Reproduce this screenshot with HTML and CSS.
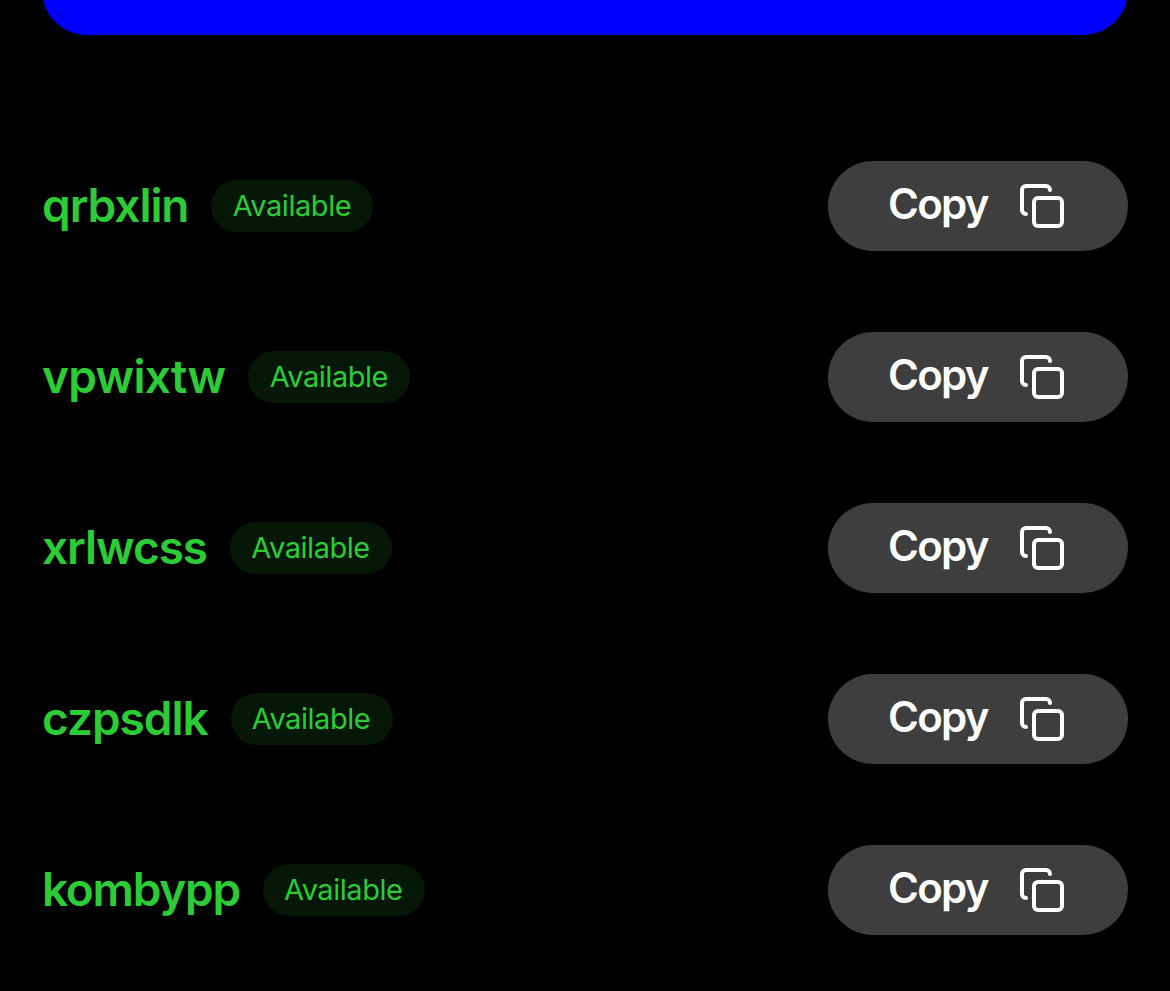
FILE: index.html
```html
<!DOCTYPE html>
<html lang="en">
<head>
    <meta charset="UTF-8">
    <meta name="viewport" content="width=device-width, initial-scale=1.0">
    <title>Usernames</title>
    <link rel="stylesheet" href="styles.css">
</head>
<body>
    <svg class="icon-defs" aria-hidden="true">
        <symbol id="icon-copy" viewBox="0 0 24 24" fill="none" stroke="currentColor" stroke-width="2" stroke-linecap="round" stroke-linejoin="round">
            <rect x="8" y="8" width="14" height="14" rx="2"/>
            <path d="M4 16c-1.1 0-2-.9-2-2V4c0-1.1.9-2 2-2h10c1.1 0 2 .9 2 2"/>
        </symbol>
    </svg>
    <main>
        <button class="generate-button" aria-label="Generate"></button>
        <ul class="name-list">
            <li class="name-row">
                <span class="name">qrbxlin</span>
                <span class="badge">Available</span>
                <button class="copy-button"><span class="copy-label">Copy</span><svg class="copy-icon"><use href="#icon-copy"/></svg></button>
            </li>
            <li class="name-row">
                <span class="name name-loose">vpwixtw</span>
                <span class="badge">Available</span>
                <button class="copy-button"><span class="copy-label">Copy</span><svg class="copy-icon"><use href="#icon-copy"/></svg></button>
            </li>
            <li class="name-row">
                <span class="name">xrlwcss</span>
                <span class="badge">Available</span>
                <button class="copy-button"><span class="copy-label">Copy</span><svg class="copy-icon"><use href="#icon-copy"/></svg></button>
            </li>
            <li class="name-row">
                <span class="name">czpsdlk</span>
                <span class="badge">Available</span>
                <button class="copy-button"><span class="copy-label">Copy</span><svg class="copy-icon"><use href="#icon-copy"/></svg></button>
            </li>
            <li class="name-row">
                <span class="name name-tight">kombypp</span>
                <span class="badge">Available</span>
                <button class="copy-button"><span class="copy-label">Copy</span><svg class="copy-icon"><use href="#icon-copy"/></svg></button>
            </li>
        </ul>
    </main>
</body>
</html>
```
FILE: styles.css
```css
:root {
    --green: #2ccc36;
    --badge-color: #051706;
    --button-color: #3e3e3e;
    --font-main: Inter, "Liberation Sans", sans-serif;
}
body { margin: 0; background-color: #000; font-family: var(--font-main); overflow: hidden; }
main { display: flow-root; padding: 0 42px; }
.icon-defs { display: none; }
.generate-button { display: block; width: 100%; height: 90px; margin-top: -55px; padding: 0; border: none; border-radius: 45px; background-color: #00f; }
.name-list { list-style: none; margin: 126px 0 0; padding: 0; display: flex; flex-direction: column; gap: 81px; }
.name-row { height: 90px; display: flex; align-items: center; }
.name { padding-bottom: 3px; color: var(--green); font-size: 46px; line-height: 56px; font-weight: 600; letter-spacing: -1.05px; }
.name-loose { letter-spacing: -0.7px; }
.name-tight { letter-spacing: -1.3px; }
.badge { box-sizing: border-box; width: 162px; height: 52px; margin-left: 23px; padding-right: 1px; border-radius: 26px; background-color: var(--badge-color); color: var(--green); font-size: 29px; line-height: 52px; letter-spacing: -0.45px; text-align: center; }
.copy-button { width: 300px; height: 90px; margin-left: auto; padding: 0 62px 0 60px; display: flex; align-items: center; justify-content: space-between; border: none; border-radius: 45px; background-color: var(--button-color); color: #fff; font-family: inherit; font-size: 42px; font-weight: 600; letter-spacing: -1.7px; }
.copy-label { padding-bottom: 6px; }
.copy-icon { width: 48px; height: 48px; }
```
